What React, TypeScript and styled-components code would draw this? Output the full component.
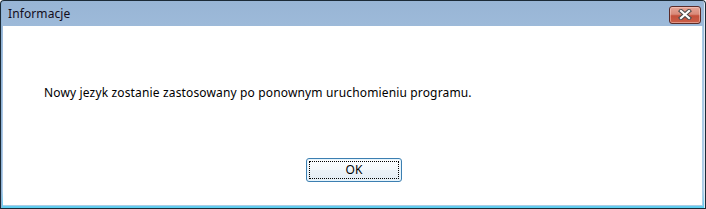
import React from "react";
import styled, { createGlobalStyle } from "styled-components";

const Global = createGlobalStyle`
  html, body { margin: 0; padding: 0; background: #ffffff; }
  body { font-family: "Noto Sans", "Open Sans", "DejaVu Sans", sans-serif; }
`;

const Window = styled.div`
  box-sizing: border-box;
  width: 706px;
  height: 209px;
  display: flex;
  flex-direction: column;
  background: #1b2a36;
  padding: 1px 1px 1px 1px;
  border-top-left-radius: 4px;
  border-top-right-radius: 4px;
`;

const Frame = styled.div`
  flex: 1;
  display: flex;
  flex-direction: column;
  border-top-left-radius: 3px;
  border-top-right-radius: 3px;
  background: linear-gradient(to bottom, #98b5d5 0%, #a9c5e3 40%, #b8d0ea 100%);
  border-right: 1px solid #dfe9f5;
  border-left: 1px solid #8fb3d6;
`;

const TitleBar = styled.div`
  height: 25px;
  display: flex;
  align-items: center;
  justify-content: space-between;
  padding: 0 3px 0 6px;
`;

const Title = styled.span`
  font-family: "Noto Sans", "Open Sans", sans-serif;
  font-size: 12px;
  color: #120d1c;
  line-height: 1;
  margin-top: 1px;
  letter-spacing: 0.1px;
`;

const CloseButton = styled.div`
  box-sizing: border-box;
  width: 32px;
  height: 18px;
  margin-top: 2px;
  border: 1px solid #5a2b28;
  border-radius: 3px;
  background: linear-gradient(to bottom, #e6a596 0%, #d98a79 45%, #c4503a 55%, #c95e48 100%);
  box-shadow: inset 0 0 0 1px rgba(255, 220, 210, 0.45);
  display: flex;
  align-items: center;
  justify-content: center;
`;

const Body = styled.div`
  flex: 1;
  display: flex;
  flex-direction: column;
  padding: 0 1px 2px 1px;
  background: linear-gradient(to bottom, transparent 0%, transparent 90%, #5bcdf0 100%);
`;

const Client = styled.div`
  flex: 1;
  background: #ffffff;
  display: flex;
  flex-direction: column;
  border-bottom: 1px solid #aacde6;
  border-right: 1px solid #aacde6;
`;

const Message = styled.p`
  margin: 0;
  padding: 59px 0 0 41px;
  font-family: "Noto Sans", "Open Sans", sans-serif;
  font-size: 12px;
  line-height: 16px;
  color: #000000;
  letter-spacing: 0.15px;
`;

const ButtonRow = styled.div`
  display: flex;
  justify-content: center;
  padding: 57px 0 0 3px;
`;

const DialogButton = styled.button`
  box-sizing: border-box;
  width: 96px;
  height: 24px;
  border: 1px solid #3c7fb1;
  border-radius: 3px;
  background: linear-gradient(to bottom, #fdfeff 0%, #f4f8fb 50%, #eaf1f7 51%, #e3ecf4 100%);
  box-shadow: inset 0 0 0 1px #e6f4fc;
  padding: 2px;
  font-family: "Noto Sans", "Open Sans", sans-serif;
  font-size: 12px;
  color: #000;
  cursor: default;
`;

const FocusRect = styled.span`
  box-sizing: border-box;
  display: flex;
  align-items: center;
  justify-content: center;
  width: 100%;
  height: 100%;
  border: 1px dotted #000;
  line-height: 1;
`;

export default function App() {
  return (
    <>
      <Global />
      <Window>
        <Frame>
          <TitleBar>
            <Title>Informacje</Title>
            <CloseButton>
              <svg width="14" height="11" viewBox="0 0 14 11">
                <path
                  d="M3 2 L11 9 M11 2 L3 9"
                  stroke="#4a4a4a"
                  strokeWidth="4.2"
                  strokeLinecap="square"
                />
                <path
                  d="M3 2 L11 9 M11 2 L3 9"
                  stroke="#ffffff"
                  strokeWidth="2.2"
                  strokeLinecap="square"
                />
              </svg>
            </CloseButton>
          </TitleBar>
          <Body>
            <Client>
              <Message>
                Nowy jezyk zostanie zastosowany po ponownym uruchomieniu programu.
              </Message>
              <ButtonRow>
                <DialogButton>
                  <FocusRect>OK</FocusRect>
                </DialogButton>
              </ButtonRow>
            </Client>
          </Body>
        </Frame>
      </Window>
    </>
  );
}
